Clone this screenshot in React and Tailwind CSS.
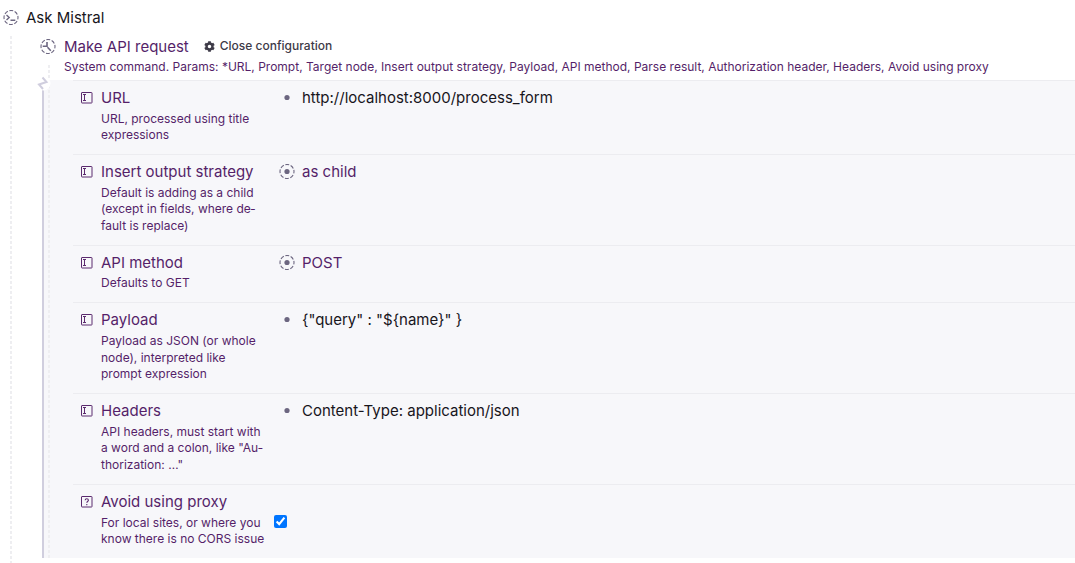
import React from 'react';
import { FaCog } from 'react-icons/fa';

const dashes =
  'bg-[repeating-linear-gradient(to_bottom,#eeeef1_0px,#eeeef1_3px,transparent_3px,transparent_5px)]';

function Ring({ children }) {
  return (
    <svg className="size-4 shrink-0 text-[#6c6680]" viewBox="0 0 16 16" fill="none" stroke="currentColor" aria-hidden="true">
      <circle cx="8" cy="7.500" r="7" strokeWidth="1.1" strokeDasharray="3.9 1.6" strokeDashoffset="1.9" />
      {children}
    </svg>
  );
}

function PromptIcon() {
  return (
    <Ring>
      <path d="M3.5 5 6.2 7.500 3.500 10M7.500 10.300h4.800" strokeWidth="1.400" />
    </Ring>
  );
}

function CommandIcon() {
  return (
    <Ring>
      <path d="M7 3v4.300h-4.300M7.500 8.200 10.800 11.700" strokeWidth="1.600" />
    </Ring>
  );
}

function OptionIcon() {
  return (
    <Ring>
      <circle cx="8" cy="7.500" r="2.600" fill="currentColor" stroke="none" />
    </Ring>
  );
}

function BulletIcon() {
  return (
    <svg className="size-4 shrink-0 text-[#6c6680]" viewBox="0 0 16 16" aria-hidden="true">
      <circle cx="8" cy="7.500" r="2.600" fill="currentColor" />
    </svg>
  );
}

function FieldIcon({ kind }) {
  return (
    <svg className="size-3 shrink-0 text-[#5b2a6e]" viewBox="0 0 12 12" fill="none" stroke="currentColor" aria-hidden="true">
      <rect x="0.5" y="0.5" width="10.500" height="10.500" rx="0.500" />
      {kind === 'check' ? (
        <path d="M4.200 4.300c0-2 3.200-2 3.200 0 0 1.200-1.600 1.200-1.600 2.500M5.800 8v1.200" strokeWidth="1.100" />
      ) : (
        <path d="M2 2.500h3M3.500 2.500v6M2 8.500h3" />
      )}
    </svg>
  );
}

const fields = [
  { name: 'URL', help: 'URL, processed using title expressions', value: 'http://localhost:8000/process_form' },
  {
    name: 'Insert output strategy',
    help: 'Default is adding as a child (except in fields, where de\u00adfault is replace)',
    option: 'as child',
  },
  { name: 'API method', help: 'Defaults to GET', option: 'POST' },
  {
    name: 'Payload',
    help: 'Payload as JSON (or whole node), interpreted like prompt expression',
    value: '{"query" : "${name}" }',
  },
  {
    name: 'Headers',
    help: 'API headers, must start with a word and a colon, like "Au\u00adthorization: \u2026"',
    value: 'Content-Type: application/json',
  },
  { name: 'Avoid using proxy', help: 'For local sites, or where you know there is no CORS issue', check: true },
];

function Field({ field }) {
  const Label = field.check ? 'label' : 'div';
  return (
    <li className="flex border-t border-[#ececf0] pt-1.5 pb-2.5 pl-2">
      <div className="flex w-[193px] shrink-0 gap-2">
        <span className="flex h-[22px] items-center">
          <FieldIcon kind={field.check ? 'check' : 'text'} />
        </span>
        <div className="w-[165px] text-[#551f69]">
          <Label className="block leading-[1.5]" htmlFor={field.check ? 'avoid-proxy' : undefined}>
            {field.name}
          </Label>
          <p className="mt-px text-xs leading-[1.4]">{field.help}</p>
        </div>
      </div>
      {field.check ? (
        <div className="flex items-center pt-1">
          <input id="avoid-proxy" type="checkbox" defaultChecked className="size-[13px] accent-[#0075ff]" />
        </div>
      ) : (
        <div className="flex h-[22px] items-center gap-[7px] pl-[5px]">
          {field.option ? <OptionIcon /> : <BulletIcon />}
          {field.option ? (
            <a href="#" className="text-[#551f69]">{field.option}</a>
          ) : (
            <span>{field.value}</span>
          )}
        </div>
      )}
    </li>
  );
}

export default function App() {
  return (
    <main className="flex min-h-screen flex-col bg-white font-['Inter',sans-serif] text-[15px] leading-[1.5] text-[#17151c]">
      <header className="flex h-9 items-center gap-[7px] pl-[3px]">
        <PromptIcon />
        <h1>Ask Mistral</h1>
      </header>
      <div className="flex grow pl-2.5">
        <div className={`w-0.5 shrink-0 ${dashes}`} />
        <section className="min-w-0 grow pb-1">
          <div className="flex h-[22px] items-center pl-7">
            <CommandIcon />
            <a href="#" className="ml-2 text-[#551f69]">Make API request</a>
            <button type="button" className="ml-[15px] flex h-5 items-center gap-[5px] self-start text-xs font-medium text-[#3d3a47]">
              <FaCog className="size-[11px]" aria-hidden="true" />
              Close configuration
            </button>
          </div>
          <div className="flex pl-9">
            <div className={`mt-[7px] w-0.5 shrink-0 ${dashes}`} />
            <p className="pb-[5px] pl-3.5 text-xs leading-[17px] text-[#551f69]">
              System command. Params: *URL, Prompt, Target node, Insert output strategy, Payload, API method, Parse
              result, Authorization header, Headers, Avoid using proxy
            </p>
          </div>
          <div className="relative ml-[30px] flex border-l-2 border-[#d0cede] bg-[#f7f7fa]">
            <div className={`ml-1 w-0.5 shrink-0 ${dashes}`} />
            <svg className="absolute -top-1 -left-2 size-4" viewBox="0 0 16 16" fill="none" aria-hidden="true">
              <circle cx="7.5" cy="7.500" r="7" fill="#fff" />
              <path d="M6.500 1.500 10.500 6 3 8.500 7 13" stroke="#d0cede" strokeWidth="2" />
            </svg>
            <ul className="ml-[23px] min-w-0 grow">
              {fields.map((field) => (
                <Field key={field.name} field={field} />
              ))}
            </ul>
          </div>
        </section>
      </div>
    </main>
  );
}
